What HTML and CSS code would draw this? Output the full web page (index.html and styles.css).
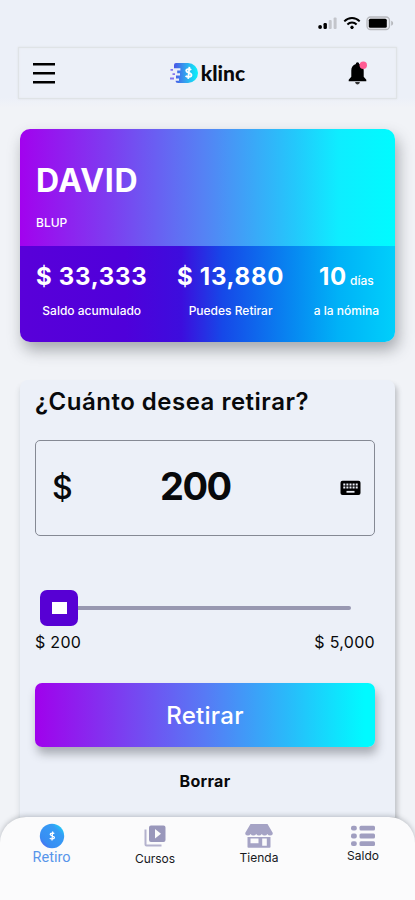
FILE: index.html
```html
<!DOCTYPE html>
<html lang="es">
<head>
<meta charset="utf-8">
<title>klinc</title>
<link rel="stylesheet" href="styles.css">
</head>
<body>
<div class="screen">
  <div class="status">
    <svg width="20" height="14" viewBox="0 0 20 14"><circle cx="2.1" cy="11" r="1.9"/><rect x="5.5" y="7" width="3.4" height="6" rx="1.2"/><rect x="10.7" y="4" width="3" height="9" rx="1" fill="#c3c5cb"/><rect x="15.6" y="1.5" width="3" height="11.5" rx="1" fill="#c3c5cb"/></svg>
    <svg class="wifi" width="18" height="14" viewBox="0 0 18 14" fill="none" stroke="#000" stroke-width="2"><path d="M1.3 5.4C5.7 1 12.3 1 16.7 5.4"/><path d="M4.4 8.5C7 5.9 11 5.9 13.6 8.5"/><circle cx="9" cy="11.4" r="1.3" fill="#000" stroke-width="1"/></svg>
    <svg class="battery" width="29" height="15" viewBox="0 0 29 15"><rect x="1" y="1" width="22.5" height="12.5" rx="3.5" fill="#e9eaf0" stroke="#b6b8bd" stroke-width="1.3"/><rect x="2.8" y="2.8" width="18" height="9" rx="1.5"/><path d="M25.2 4.8c2.6 1 2.6 4 0 5z" fill="#b6b8bd"/></svg>
  </div>
  <header class="header">
    <svg class="menu" width="24" height="24" viewBox="0 0 24 24"><path d="M1 3.2h22M1 12.2h22M1 21.2h22" stroke="#000" stroke-width="2.5"/></svg>
    <div class="brand">
      <svg width="31" height="22" viewBox="0 0 31 22">
        <defs><linearGradient id="logo"><stop offset="0" stop-color="#4c55e6"/><stop offset=".5" stop-color="#31a6ef"/><stop offset="1" stop-color="#08f4fb"/></linearGradient></defs>
        <path d="M7 1h12a10 10 0 0 1 0 20H9q-2.5 0-2.5-2.2H10v-2.2H7v-3h4v-2.3H8.2V8.4h3.2V6.2H5V3q0-2 2-2z" fill="url(#logo)"/>
        <path d="M1.5 7.8h2.5M1 16.5h4M3.5 12.2h2.500" stroke="#8277ee" stroke-width="1.8"/>
        <path d="M22.2 7.8c-1-1-5-1-5 .9 0 2.4 5.3 1.7 5.3 4.3 0 2.3-4.3 2.4-5.9.8M20.4 4.8l-1.2 12" fill="none" stroke="#fff" stroke-width="1.8"/>
      </svg>
      <span>klinc</span>
    </div>
    <svg class="bell" width="20" height="25" viewBox="0 0 20 25"><path d="M9.5 1.2c1.1 0 1.6.7 1.6 1.8 3.2.8 4.6 3.4 4.6 6.6v6.2l2.6 3v1.5H.7v-1.5l2.6-3V9.6C3.3 6.4 4.7 3.8 7.9 3c0-1.1.5-1.8 1.6-1.8z"/><path d="M7.2 21h4.6c0 3.3-4.6 3.3-4.6 0z" fill="#333"/><circle cx="15.3" cy="4.3" r="3.7" fill="#ff5c93"/></svg>
  </header>

  <section class="card">
    <div class="owner">
      <h1>DAVID</h1>
      <p>BLUP</p>
    </div>
    <div class="stats">
      <div class="stat saved"><strong>$ 33,333</strong><span>Saldo acumulado</span></div>
      <div class="stat available"><strong>$ 13,880</strong><span>Puedes Retirar</span></div>
      <div class="stat days"><div class="count"><strong>10</strong><small>días</small></div><span>a la nómina</span></div>
    </div>
  </section>

  <main class="panel">
    <h2>¿Cuánto desea retirar?</h2>
    <div class="amount">
      <span class="currency">$</span>
      <span class="value">200</span>
      <svg width="21" height="16" viewBox="0 0 21 16"><rect x=".5" y=".7" width="20" height="14.3" rx="2"/><path d="M3.3 4.4h14.4M3.3 7.5h14.4" stroke="#edf0f8" stroke-width="2" stroke-dasharray="2 1.1"/><path d="M6.5 11.8h8" stroke="#edf0f8" stroke-width="1.8"/></svg>
    </div>
    <div class="slider"><div class="thumb"></div><div class="track"></div></div>
    <div class="range"><span>$ 200</span><span>$ 5,000</span></div>
    <button class="withdraw">Retirar</button>
    <button class="clear">Borrar</button>
  </main>

  <nav class="nav">
    <a class="tab active">
      <svg width="26" height="26" viewBox="0 0 26 26"><defs><linearGradient id="coin" x1="0" y1="1" x2="1" y2="0"><stop offset="0" stop-color="#5e51ef"/><stop offset=".25" stop-color="#388df3"/><stop offset=".72" stop-color="#369cf5"/><stop offset="1" stop-color="#0cecf8"/></linearGradient></defs><circle cx="13" cy="13" r="12.2" fill="url(#coin)"/><path d="M15.2 10.7c-.6-1-4-1-4 .6 0 1.9 4.2 1.3 4.2 3.3 0 1.6-3.5 1.8-4.6.5M13.6 8.5l-.6 9" fill="none" stroke="#fff" stroke-width="1.3"/></svg>
      <span>Retiro</span>
    </a>
    <a class="tab courses">
      <svg width="22" height="22" viewBox="0 0 22 22" fill="#9997bb"><path d="M.5 4.5h2v15h15v2h-15q-2 0-2-2z" fill="#b4b2cd"/><path d="M7 .5h12.5q2 0 2 2v12.5q0 2-2 2H7q-2 0-2-2V2.5q0-2 2-2zM11 4v9.5l6-4.7z" fill-rule="evenodd"/></svg>
      <span>Cursos</span>
    </a>
    <a class="tab shop">
      <svg width="28" height="24" viewBox="0 0 28 24" fill="#a5a3c5"><path d="M5.5 0h17l5.3 9q0 2.5-2.6 2.5-1.9 0-2.8-1.5-.9 1.5-2.8 1.5T16.800 10q-.9 1.500-2.800 1.500T11.200 10q-.9 1.500-2.800 1.500T5.600 10q-.9 1.500-2.800 1.500Q.2 11.500.2 9z"/><path d="M2.500 13h23v10q0 .8-1 .8h-21q-1 0-1-.8zM5.500 14.500v4.700h8v-4.700zM17.200 14.500v7.300h4.600v-7.300z" fill-rule="evenodd"/></svg>
      <span>Tienda</span>
    </a>
    <a class="tab balance">
      <svg width="26" height="22" viewBox="0 0 26 22" fill="#a09ec0"><rect x="1" y=".8" width="5.8" height="4.8" rx="2"/><rect x="9.5" y=".8" width="15.5" height="4.8" rx="1.5"/><rect x="1" y="8.6" width="5.8" height="4.8" rx="2"/><rect x="9.5" y="8.6" width="15.5" height="4.8" rx="1.5"/><rect x="1" y="16.2" width="5.8" height="4.8" rx="2"/><rect x="9.5" y="16.2" width="15.5" height="4.8" rx="1.5"/></svg>
      <span>Saldo</span>
    </a>
  </nav>
</div>
</body>
</html>
```
FILE: styles.css
```css
* { box-sizing: border-box; }
body { margin: 0; font-family: Inter, "Liberation Sans", sans-serif; color: #08090b; }
h1, h2, p { margin: 0; }
svg { display: block; flex: none; }
button { border: 0; padding: 0; font-family: inherit; }

.screen {
  display: flex; flex-direction: column;
  height: 900px; overflow: hidden;
  background: linear-gradient(#ecf0f8 0, #ecf0f8 98px, #f1f3f7 108px, #f1f3f7 100%);
}
.status { height: 47px; display: flex; justify-content: flex-end; align-items: flex-start; padding: 16px 20px 0 0; }
.wifi { margin-left: 5px; }
.battery { margin-left: 5px; }

.header {
  height: 52px; margin: 0 18px; padding: 0 28px 0 13px;
  display: flex; justify-content: space-between; align-items: center;
  border: 1px solid #dfe3e6; box-shadow: 0 0 2px #dde1e5, inset 0 0 2px #e3e7eb;
}
.brand { display: flex; align-items: center; margin-left: 10px; }
.brand span { font: 900 21px/26px Lato, sans-serif; margin-left: 1px; }

.card {
  height: 213px; margin: 30px 20px 0; border-radius: 10px; overflow: hidden; flex: none;
  color: #fff; box-shadow: 3px 8px 15px rgba(50, 54, 62, .4);
}
.owner { height: 117px; padding: 33px 17px 0 16px; background: linear-gradient(90deg, #a202ee 0, #7d3df0 24%, #5582f4 49%, #24c7fb 73%, #0eedff 85%, #00fbff 100%); }
.owner h1 { font-size: 32px; line-height: 38px; font-weight: 700; letter-spacing: .6px; }
.owner p { font-size: 12px; line-height: 16px; margin-top: 15px; font-weight: 500; }
.stats { height: 96px; display: flex; padding: 17px 16px 0 16px; justify-content: space-between; background: linear-gradient(90deg, #5900d9 0, #4f00da 28%, #3d0ddd 43%, #1648e8 54%, #0789f1 73%, #00b2f7 85%, #00cffb 100%); }
.stat { display: flex; flex-direction: column; align-items: center; white-space: nowrap; }
.stat strong { height: 28px; font-size: 24px; line-height: 28px; font-weight: 700; letter-spacing: .7px; }
.stat span { font-size: 12px; line-height: 16px; margin-top: 12px; font-weight: 500; }
.count { height: 28px; display: flex; align-items: baseline; gap: 3px; }
.stat small { font-size: 12px; line-height: 16px; font-weight: 500; }

.panel {
  flex: 1; margin: 38px 20px 0; padding: 7px 20px 0 15px;
  background: #ecf0f8; border-radius: 8px 8px 0 0;
  box-shadow: 3px 4px 4px rgba(70, 75, 85, .25), -2px 4px 4px rgba(70, 75, 85, .08);
}
.panel h2 { font-size: 24px; line-height: 30px; font-weight: 600; letter-spacing: .5px; white-space: nowrap; }
.amount {
  height: 96px; margin-top: 23px; padding: 0 13px 0 16px;
  display: flex; align-items: center; justify-content: space-between;
  border: 1px solid #858994; border-radius: 5px;
}
.currency { font-size: 32px; line-height: 40px; font-weight: 500; }
.value { font-size: 38px; line-height: 44px; font-weight: 700; letter-spacing: -1.5px; margin: -4px 22px 0 0; }
.slider { height: 37px; margin: 53px 24px 0 5px; display: flex; align-items: center; }
.thumb { width: 38px; height: 36px; border-radius: 7px; background: #5700d4; display: grid; place-items: center; }
.thumb::after { content: ""; width: 15px; height: 12px; background: #fff; }
.track { flex: 1; height: 4px; background: #9898b1; border-radius: 0 2px 2px 0; }
.range { display: flex; justify-content: space-between; font-size: 16px; line-height: 20px; margin-top: 6px; letter-spacing: .3px; }
.withdraw {
  display: block; width: 100%; height: 64px; margin-top: 31px; border-radius: 7px; color: #fff;
  font-size: 24px; font-weight: 500; letter-spacing: .3px;
  background: linear-gradient(90deg, #a001ec 0, #7c3df0 25%, #577af5 50%, #28bcfa 75%, #00faff 97%);
  box-shadow: 2px 7px 10px rgba(50, 54, 62, .36);
}
.clear { display: block; margin: 24px auto 0; background: none; color: #08090b; font-size: 16px; line-height: 20px; font-weight: 700; letter-spacing: .3px; }

.nav {
  height: 83px; flex: none; position: relative; display: grid; grid-template-columns: repeat(4, 104px);
  background: #fbfbfc; border-radius: 26px 26px 0 0; box-shadow: 0 -1px 5px rgba(60, 65, 75, .3);
}
.tab { display: flex; flex-direction: column; align-items: center; font-size: 12px; line-height: 16px; color: #17191d; padding-right: 2px; }
.active { padding-top: 6px; padding-right: 1px; font-family: Roboto, sans-serif; font-size: 14.5px; line-height: 17px; color: #5795ea; }
.courses { padding-top: 8px; }
.courses span { margin-top: 4px; }
.shop { padding-top: 7px; }
.shop span { margin-top: 2px; }
.balance { padding-top: 8px; }
.balance span { margin-top: 1px; }
```
